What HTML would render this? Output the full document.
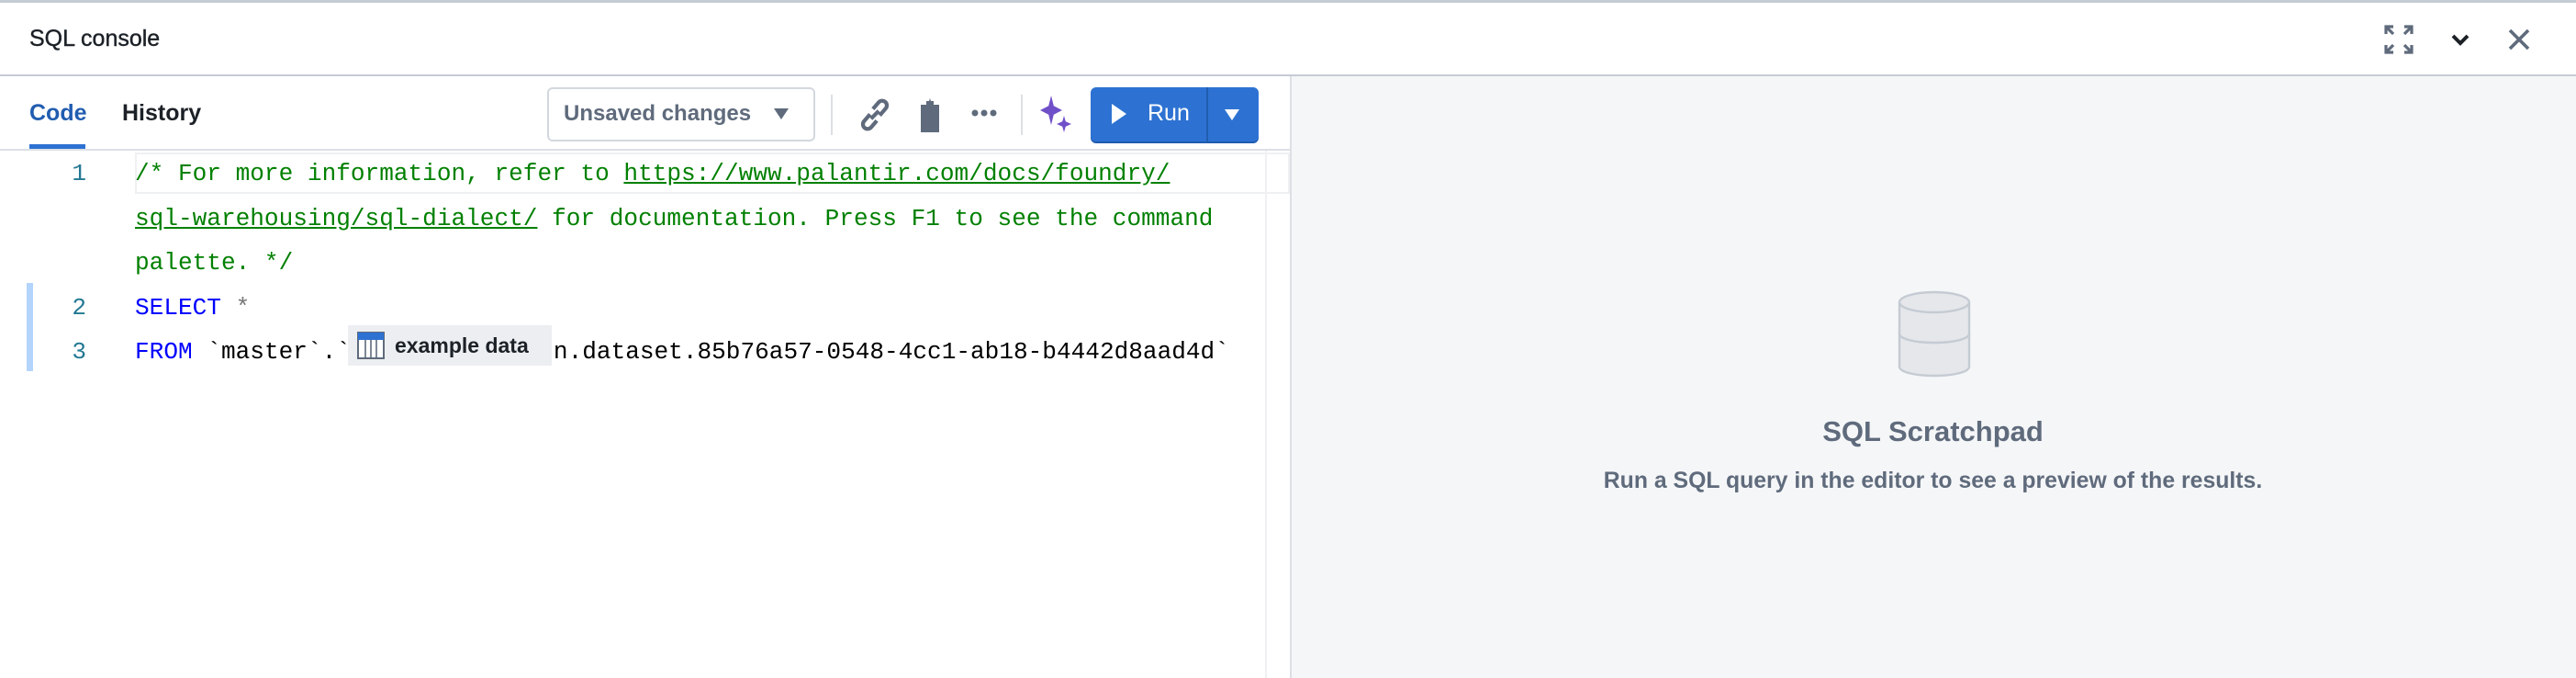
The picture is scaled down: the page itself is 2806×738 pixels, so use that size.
<!DOCTYPE html>
<html><head><meta charset="utf-8"><style>
*{box-sizing:border-box;margin:0;padding:0}
body{width:2806px;height:738px;overflow:hidden;background:#fff;font-family:"Liberation Sans",sans-serif;position:relative}
.a{position:absolute}
.mono{font-family:"Liberation Mono",monospace;font-size:26.1px;white-space:pre}
</style></head><body>
<div class="a" style="left:0;top:0;width:2806px;height:3px;background:#c5cbd3"></div>
<div class="a" style="left:32px;top:28px;font-size:25px;color:#1c2127;-webkit-text-stroke:0.4px #1c2127">SQL console</div>
<!-- header icons -->
<svg class="a" style="left:2597px;top:27px" width="32" height="32" viewBox="0 0 16 16" fill="none" stroke="#5f6b7c" stroke-width="1.6"><path d="M1 5V1h4M1 1l4 4M11 1h4v4M15 1l-4 4M1 11v4h4M1 15l4-4M15 11v4h-4M15 15l-4-4"/></svg>
<svg class="a" style="left:2668px;top:33px" width="24" height="20" viewBox="0 0 12 10" fill="none" stroke="#1c2127" stroke-width="2"><path d="M2 3l4 4 4-4"/></svg>
<svg class="a" style="left:2732px;top:31px" width="24" height="24" viewBox="0 0 12 12" fill="none" stroke="#5f6b7c" stroke-width="1.8"><path d="M1 1l10 10M11 1L1 11"/></svg>
<div class="a" style="left:0;top:81px;width:2806px;height:2px;background:#c5cbd3"></div>
<!-- right panel -->
<div class="a" style="left:1405px;top:83px;width:1401px;height:655px;background:#f5f6f8;border-left:2px solid #dce0e5"></div>
<svg class="a" style="left:2067px;top:315px" width="80" height="96" viewBox="0 0 40 48" fill="#e5e7eb" stroke="#c5cbd3" stroke-width="1.2"><path d="M1 24v18c0 3 8.5 5 19 5s19-2 19-5V24"/><ellipse cx="20" cy="24" rx="19" ry="5"/><path d="M1 7v17c0 3 8.5 5 19 5s19-2 19-5V7"/><ellipse cx="20" cy="7" rx="19" ry="5.5"/></svg>
<div class="a" style="left:1405px;top:452px;width:1401px;text-align:center;font-size:31px;font-weight:bold;color:#5f6b7c">SQL Scratchpad</div>
<div class="a" style="left:1405px;top:510px;width:1401px;text-align:center;font-size:24.8px;font-weight:bold;color:#5f6b7c">Run a SQL query in the editor to see a preview of the results.</div>
<!-- tabs -->
<div class="a" style="left:32px;top:109px;font-size:25px;color:#215db0;font-weight:bold">Code</div>
<div class="a" style="left:32px;top:157px;width:61px;height:6px;background:#2d72d2"></div>
<div class="a" style="left:133px;top:109px;font-size:25px;color:#1c2127;font-weight:bold">History</div>
<div class="a" style="left:0;top:162px;width:1405px;height:2px;background:#dce0e5"></div>
<div class="a" style="left:596px;top:95px;width:292px;height:59px;border:2px solid #d3d8de;border-radius:6px;background:#fff"></div>
<div class="a" style="left:614px;top:110px;font-size:24px;color:#5f6b7c;font-weight:bold">Unsaved changes</div>
<svg class="a" style="left:843px;top:118px" width="16" height="12" viewBox="0 0 8 6"><path d="M0 0h8L4 6z" fill="#5f6b7c"/></svg>
<div class="a" style="left:905px;top:103px;width:2px;height:44px;background:#dce0e5"></div>
<svg class="a" style="left:936px;top:106px" width="34" height="38" viewBox="0 0 16 18" fill="none" stroke="#5f6b7c" stroke-width="2"><path d="M7 6l3-3.5a2.4 2.4 0 013.5 3.3L10.5 9.3M9 12l-3 3.5A2.4 2.4 0 012.5 12.2L5.5 8.7M6 11l4-4"/></svg>
<svg class="a" style="left:1001px;top:106px" width="24" height="40" viewBox="0 0 12 20"><path d="M4 2h1.5l.5-1.5h0L6.5 2H8v2h3v15H1V4h3z" fill="#5f6b7c"/></svg>
<svg class="a" style="left:1058px;top:118px" width="28" height="10" viewBox="0 0 28 10" fill="#5f6b7c"><circle cx="4" cy="5" r="3.5"/><circle cx="14" cy="5" r="3.5"/><circle cx="24" cy="5" r="3.5"/></svg>
<div class="a" style="left:1112px;top:103px;width:2px;height:44px;background:#dce0e5"></div>
<svg class="a" style="left:1133px;top:104px" width="36" height="42" viewBox="0 0 18 21" fill="#7050c8"><path d="M6 0l1.4 5.6L12 8 7.4 10.4 6 16 4.6 10.4 0 8l4.6-2.4z"/><path d="M13 11l.9 3.1L17 15.5l-3.1 1.4L13 20l-.9-3.1L9 15.5l3.1-1.4z"/></svg>
<div class="a" style="left:1188px;top:95px;width:183px;height:59px;background:#2d72d2;border-radius:6px;box-shadow:0 2px 0 #1f5bb0"></div>
<div class="a" style="left:1314px;top:95px;width:2px;height:59px;background:#215db0"></div>
<svg class="a" style="left:1211px;top:113px" width="16" height="22" viewBox="0 0 8 11"><path d="M0 0l8 5.5L0 11z" fill="#fff"/></svg>
<div class="a" style="left:1250px;top:109px;font-size:25px;color:#fff">Run</div>
<svg class="a" style="left:1334px;top:119px" width="16" height="12" viewBox="0 0 8 6"><path d="M0 0h8L4 6z" fill="#fff"/></svg>
<!-- editor -->
<div class="a" style="left:147px;top:166px;width:1258px;height:45px;border:2px solid #eef0f2"></div>
<div class="a" style="left:1378px;top:164px;width:2px;height:574px;background:#f0f1f3"></div>
<div class="a" style="left:29px;top:308px;width:7px;height:96px;background:#b3d4fc"></div>
<div class="a mono" style="left:60px;top:165px;width:34px;text-align:right;color:#237893;line-height:48.5px">1<br><br><br>2<br>3</div>
<div class="a mono" style="left:147px;top:165px;color:#008000;line-height:48.5px">/* For more information, refer to <u>https://www.palantir.com/docs/foundry/</u>
<u>sql-warehousing/sql-dialect/</u> for documentation. Press F1 to see the command
palette. */
<span style="color:#0000ff">SELECT</span> <span style="color:#777">*</span>
<span style="color:#0000ff">FROM</span> <span style="color:#000">`master`.`<span style="display:inline-block;width:221px"></span>n.dataset.85b76a57-0548-4cc1-ab18-b4442d8aad4d`</span></div>
<div class="a" style="left:379px;top:354px;width:222px;height:44px;background:#eceef1"></div>
<svg class="a" style="left:388px;top:360px" width="32" height="32" viewBox="0 0 16 16"><rect x="1" y="1" width="14" height="14" fill="#fff" stroke="#5f6b7c"/><rect x="1" y="1" width="14" height="4" fill="#2d72d2"/><path d="M5 5v10M8 5v10M11 5v10" stroke="#5f6b7c" stroke-width=".8"/></svg>
<div class="a" style="left:430px;top:363px;font-size:23px;font-weight:bold;color:#1c2127">example data</div>
</body></html>
